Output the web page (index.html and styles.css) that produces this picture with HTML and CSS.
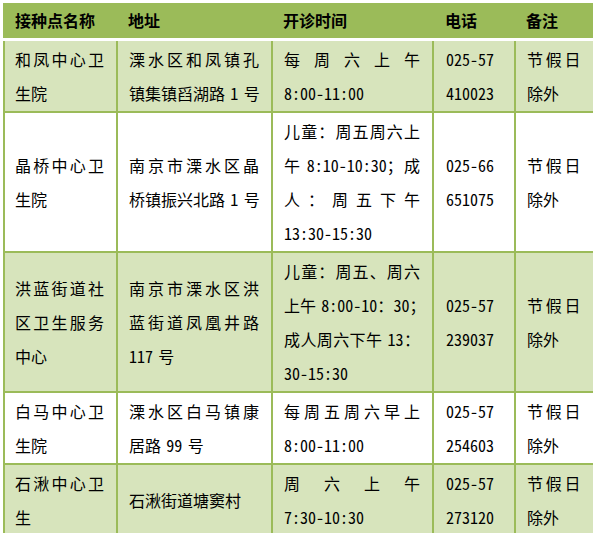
FILE: index.html
```html
<!DOCTYPE html>
<html lang="zh-CN">
<head>
<meta charset="utf-8">
<title>接种点</title>
<link rel="stylesheet" href="styles.css">
</head>
<body>
<table class="sched">
  <colgroup>
    <col class="c1"><col class="c2"><col class="c3"><col class="c4"><col class="c5">
  </colgroup>
  <thead>
    <tr>
      <th class="p1">接种点名称</th>
      <th>地址</th>
      <th>开诊时间</th>
      <th class="p4">电话</th>
      <th>备注</th>
    </tr>
  </thead>
  <tbody>
    <tr class="alt">
      <td class="p1"><span class="j">和凤中心卫</span><span class="l">生院</span></td>
      <td><span class="j">溧水区和凤镇孔</span><span class="l">镇集镇舀湖路&#x2004;<span class="n">1</span>&#x2004;号</span></td>
      <td><span class="j">每周六上午</span><span class="l n">8:00-11:00</span></td>
      <td class="p4"><span class="l n">025-57</span><span class="l n">410023</span></td>
      <td><span class="j">节假日</span><span class="l">除外</span></td>
    </tr>
    <tr>
      <td class="p1"><span class="j">晶桥中心卫</span><span class="l">生院</span></td>
      <td><span class="j">南京市溧水区晶</span><span class="l">桥镇振兴北路&#x2004;<span class="n">1</span>&#x2004;号</span></td>
      <td><span class="j">儿童：周五周六上</span><span class="j">午&#x2004;<span class="n">8:10-10:30</span>；成</span><span class="j">人：周五下午</span><span class="l n">13:30-15:30</span></td>
      <td class="p4"><span class="l n">025-66</span><span class="l n">651075</span></td>
      <td><span class="j">节假日</span><span class="l">除外</span></td>
    </tr>
    <tr class="alt">
      <td class="p1"><span class="j">洪蓝街道社</span><span class="j">区卫生服务</span><span class="l">中心</span></td>
      <td><span class="j">南京市溧水区洪</span><span class="j">蓝街道凤凰井路</span><span class="l"><span class="n">117</span>&#x2004;号</span></td>
      <td><span class="j">儿童：周五、周六</span><span class="j">上午&#x2004;<span class="n">8:00-10</span>：<span class="n">30</span>；</span><span class="j">成人周六下午&#x2004;<span class="n">13</span>：</span><span class="l n">30-15:30</span></td>
      <td class="p4"><span class="l n">025-57</span><span class="l n">239037</span></td>
      <td><span class="j">节假日</span><span class="l">除外</span></td>
    </tr>
    <tr>
      <td class="p1"><span class="j">白马中心卫</span><span class="l">生院</span></td>
      <td><span class="j">溧水区白马镇康</span><span class="l">居路&#x2004;<span class="n">99</span>&#x2004;号</span></td>
      <td><span class="j">每周五周六早上</span><span class="l n">8:00-11:00</span></td>
      <td class="p4"><span class="l n">025-57</span><span class="l n">254603</span></td>
      <td><span class="j">节假日</span><span class="l">除外</span></td>
    </tr>
    <tr class="alt">
      <td class="p1"><span class="j">石湫中心卫</span><span class="l">生</span></td>
      <td><span class="l">石湫街道塘窦村</span></td>
      <td><span class="j">周六上午</span><span class="l n">7:30-10:30</span></td>
      <td class="p4"><span class="l n">025-57</span><span class="l n">273120</span></td>
      <td><span class="j">节假日</span><span class="l">除外</span></td>
    </tr>
  </tbody>
</table>
</body>
</html>
```

FILE: styles.css
```css
html, body {
  margin: 0;
  padding: 0;
  background: #ffffff;
}
body {
  padding: 3px 0 0 3px;
  height: 533px;
  box-sizing: border-box;
  overflow: hidden;
  font-family: "Noto Sans CJK SC", "Noto Sans", sans-serif;
  font-size: 16px;
  color: #000;
}
.sched {
  width: 590px;
  table-layout: fixed;
  border-collapse: collapse;
  border-left: 2px solid #9bbb59;
  border-right: 3px solid #9bbb59;
}
.c1 { width: 113px; }
.c2 { width: 155px; }
.c3 { width: 161px; }
.c4 { width: 82px; }
.c5 { width: 79px; }

.sched th {
  background: #9bbb59;
  height: 35px;
  padding: 0 12px 0 11px;
  text-align: left;
  font-weight: 700;
  line-height: 35px;
  border: none;
  border-bottom: 3px solid #ffffff;
}
.sched td {
  padding: 1px 12px 1px 11px;
  vertical-align: middle;
  line-height: 34px;
  border: 2px solid #9bbb59;
  background: #ffffff;
}
.sched tr.alt td {
  background: #d7e4bc;
}
.sched .p1 { padding-left: 10px; }
.sched .p4 { padding-left: 12px; }

.j, .l {
  display: block;
  white-space: nowrap;
}
.j {
  text-align: justify;
  text-align-last: justify;
}
.l {
  text-align: left;
}
.n {
  font-feature-settings: "hwid" 1;
}
```
